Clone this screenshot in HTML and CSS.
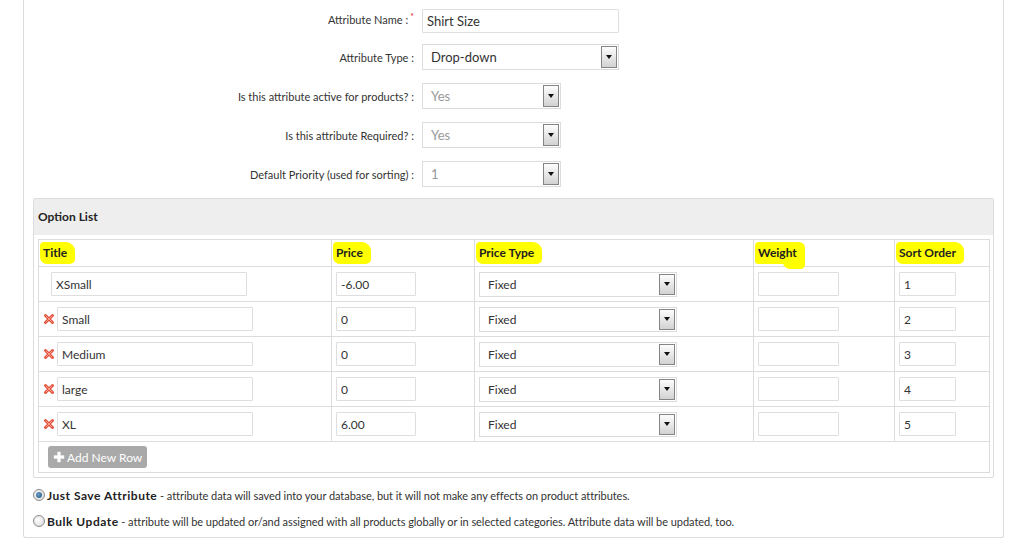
FILE: index.html
```html
<!DOCTYPE html>
<html>
<head>
<meta charset="utf-8">
<link rel="stylesheet" href="styles.css">
</head>
<body>
<div class="page">
  <div class="form-row first">
    <div class="label lift">Attribute Name :<span class="req">*</span></div>
    <input class="txt wide" type="text" value="Shirt Size">
  </div>
  <div class="form-row">
    <div class="label">Attribute Type :</div>
    <div class="sel wide"><span class="val">Drop-down</span><span class="arrow"></span></div>
  </div>
  <div class="form-row">
    <div class="label">Is this attribute active for products? :</div>
    <div class="sel narrow dis"><span class="val">Yes</span><span class="arrow"></span></div>
  </div>
  <div class="form-row">
    <div class="label">Is this attribute Required? :</div>
    <div class="sel narrow dis"><span class="val">Yes</span><span class="arrow"></span></div>
  </div>
  <div class="form-row last">
    <div class="label">Default Priority (used for sorting) :</div>
    <div class="sel narrow dis"><span class="val">1</span><span class="arrow"></span></div>
  </div>

  <div class="panel">
    <div class="panel-head">Option List</div>
    <div class="panel-body">
      <table class="opts">
        <colgroup>
          <col class="c1"><col class="c2"><col class="c3"><col class="c4"><col class="c5">
        </colgroup>
        <thead>
          <tr>
            <th><span class="hl hl-title">Title</span></th>
            <th><span class="hl hl-price">Price</span></th>
            <th><span class="hl hl-ptype">Price Type</span></th>
            <th><span class="hl hl-weight">Weight</span></th>
            <th><span class="hl hl-sort">Sort Order</span></th>
          </tr>
        </thead>
        <tbody>
          <tr>
            <td><div class="tcell"><span class="spacer"></span><input class="txt title-in" type="text" value="XSmall"></div></td>
            <td><input class="txt price-in" type="text" value="-6.00"></td>
            <td><div class="sel tsel"><span class="val">Fixed</span><span class="arrow"></span></div></td>
            <td><input class="txt weight-in" type="text" value=""></td>
            <td><input class="txt sort-in" type="text" value="1"></td>
          </tr>
          <tr>
            <td><div class="tcell"><svg class="del" viewBox="0 0 12 12" width="12" height="12"><path d="M2.5 2.5 L9.5 9.5 M9.5 2.5 L2.5 9.5" stroke="#e5533d" stroke-width="3" stroke-linecap="round"/><path d="M3 3 L9 9 M9 3 L3 9" stroke="#f7a08e" stroke-width="1" stroke-linecap="round"/></svg><input class="txt title-in" type="text" value="Small"></div></td>
            <td><input class="txt price-in" type="text" value="0"></td>
            <td><div class="sel tsel"><span class="val">Fixed</span><span class="arrow"></span></div></td>
            <td><input class="txt weight-in" type="text" value=""></td>
            <td><input class="txt sort-in" type="text" value="2"></td>
          </tr>
          <tr>
            <td><div class="tcell"><svg class="del" viewBox="0 0 12 12" width="12" height="12"><path d="M2.5 2.5 L9.5 9.5 M9.5 2.5 L2.5 9.5" stroke="#e5533d" stroke-width="3" stroke-linecap="round"/><path d="M3 3 L9 9 M9 3 L3 9" stroke="#f7a08e" stroke-width="1" stroke-linecap="round"/></svg><input class="txt title-in" type="text" value="Medium"></div></td>
            <td><input class="txt price-in" type="text" value="0"></td>
            <td><div class="sel tsel"><span class="val">Fixed</span><span class="arrow"></span></div></td>
            <td><input class="txt weight-in" type="text" value=""></td>
            <td><input class="txt sort-in" type="text" value="3"></td>
          </tr>
          <tr>
            <td><div class="tcell"><svg class="del" viewBox="0 0 12 12" width="12" height="12"><path d="M2.5 2.5 L9.5 9.5 M9.5 2.5 L2.5 9.5" stroke="#e5533d" stroke-width="3" stroke-linecap="round"/><path d="M3 3 L9 9 M9 3 L3 9" stroke="#f7a08e" stroke-width="1" stroke-linecap="round"/></svg><input class="txt title-in" type="text" value="large"></div></td>
            <td><input class="txt price-in" type="text" value="0"></td>
            <td><div class="sel tsel"><span class="val">Fixed</span><span class="arrow"></span></div></td>
            <td><input class="txt weight-in" type="text" value=""></td>
            <td><input class="txt sort-in" type="text" value="4"></td>
          </tr>
          <tr>
            <td><div class="tcell"><svg class="del" viewBox="0 0 12 12" width="12" height="12"><path d="M2.5 2.5 L9.5 9.5 M9.5 2.5 L2.5 9.5" stroke="#e5533d" stroke-width="3" stroke-linecap="round"/><path d="M3 3 L9 9 M9 3 L3 9" stroke="#f7a08e" stroke-width="1" stroke-linecap="round"/></svg><input class="txt title-in" type="text" value="XL"></div></td>
            <td><input class="txt price-in" type="text" value="6.00"></td>
            <td><div class="sel tsel"><span class="val">Fixed</span><span class="arrow"></span></div></td>
            <td><input class="txt weight-in" type="text" value=""></td>
            <td><input class="txt sort-in" type="text" value="5"></td>
          </tr>
          <tr class="add-row">
            <td colspan="5">
              <button class="add-btn" type="button"><svg class="plus" viewBox="0 0 12 12" width="12" height="12"><path d="M4.5 1 H7.5 V4.5 H11 V7.5 H7.5 V11 H4.5 V7.5 H1 V4.5 H4.5 Z" fill="#fff" stroke="#eee" stroke-width="0.5"/></svg>Add New Row</button>
            </td>
          </tr>
        </tbody>
      </table>
    </div>
  </div>

  <div class="radios">
    <div class="radio-row"><span class="radio checked"></span><span class="rtext"><b>Just Save Attribute</b> - attribute data will saved into your database, but it will not make any effects on product attributes.</span></div>
    <div class="radio-row"><span class="radio"></span><span class="rtext"><b>Bulk Update</b> - attribute will be updated or/and assigned with all products globally or in selected categories. Attribute data will be updated, too.</span></div>
  </div>
</div>
</body>
</html>
```

FILE: styles.css
```css
* { box-sizing: border-box; }
html, body { margin: 0; padding: 0; background: #fff; }
body {
  font-family: Lato, "Open Sans", Arial, sans-serif;
  color: #333;
  font-size: 11px;
}
.page {
  margin-left: 23px;
  width: 981px;
  border: 1px solid #dcdcdc;
  border-top: none;
  border-radius: 0 0 3px 3px;
  padding-top: 9px;
  padding-bottom: 3px;
}
.form-row {
  display: flex;
  align-items: center;
  height: 26px;
  margin-bottom: 13px;
}
.form-row.first { height: 24px; margin-bottom: 11px; }
.form-row.last { margin-bottom: 11px; }
.label {
  width: 390px;
  text-align: right;
  font-size: 11px;
  color: #333;
  margin-right: 8px;
}
.label.lift { padding-bottom: 5px; }
.req { color: #e0202a; font-size: 9px; vertical-align: 4px; margin-left: 2px; }

.txt {
  height: 24px;
  border: 1px solid #dedede;
  border-radius: 1px;
  padding: 0 4px;
  font-family: Lato, "Open Sans", Arial, sans-serif;
  font-size: 12px;
  color: #333;
  background: #fff;
  outline: none;
  margin: 0;
}
.txt.wide { width: 197px; font-size: 13px; }

.sel {
  display: flex;
  align-items: center;
  height: 26px;
  border: 1px solid #dcdcdc;
  background: #fff;
  padding: 1px 1px 1px 8px;
}
.sel .val { flex: 1; font-size: 13px; color: #333; }
.sel.dis .val { color: #999; }
.sel.wide { width: 197px; }
.sel.narrow { width: 139px; }
.arrow {
  width: 16px;
  height: 100%;
  border: 1px solid #858585;
  background: linear-gradient(#fdfdfd, #d2d2d2);
  display: flex;
  align-items: center;
  justify-content: center;
}
.arrow::after {
  content: "";
  border-left: 3.5px solid transparent;
  border-right: 3.5px solid transparent;
  border-top: 4px solid #111;
}

.panel {
  margin: 0 9px;
  border: 1px solid #dcdcdc;
  border-radius: 2px;
}
.panel-head {
  background: #eeeeee;
  height: 36px;
  display: flex;
  align-items: center;
  padding-left: 4px;
  font-weight: bold;
  font-size: 12px;
  color: #222;
  padding-bottom: 1px;
}
.panel-body { padding: 4px; }
.opts {
  width: 951px;
  table-layout: fixed;
  border-collapse: collapse;
  border: 1px solid #dcdcdc;
}
.c1 { width: 293px; }
.c2 { width: 143px; }
.c3 { width: 279px; }
.c4 { width: 141px; }
.c5 { width: 95px; }
.opts th {
  height: 27px;
  text-align: left;
  font-size: 12px;
  font-weight: bold;
  color: #222;
  padding: 0 4px;
  border: 1px solid #dcdcdc;
  vertical-align: middle;
  line-height: 14px;
}
.opts td {
  height: 35px;
  padding: 0 4px;
  border: 1px solid #dcdcdc;
  vertical-align: middle;
}
.tcell { display: flex; align-items: center; }
.spacer { width: 8px; flex: none; }
.del { flex: none; margin-right: 2px; }
.title-in { width: 196px; }
.price-in { width: 80px; }
.weight-in { width: 81px; }
.sort-in { width: 57px; }
.tsel { width: 198px; height: 25px; }
.tsel .val { font-size: 12px; }

.hl {
  display: inline-block;
  position: relative;
  background: #ffff00;
  padding: 4px 8px 4px 3px;
  margin: -4px 0 -4px -3px;
  border-radius: 4px 9px 5px 7px;
}
.hl-weight { border-radius: 4px 6px 2px 3px; }
.hl-weight::after {
  content: "";
  position: absolute;
  right: 0;
  bottom: -5px;
  width: 22px;
  height: 7px;
  background: #ffff00;
  border-radius: 0 0 5px 8px;
}

.add-row td { height: 31px; padding: 0 9px; }
.add-btn {
  display: inline-flex;
  align-items: center;
  height: 22px;
  width: 99px;
  background: #a9a9a9;
  color: #fff;
  border: none;
  border-radius: 3px;
  font-family: Lato, "Open Sans", Arial, sans-serif;
  font-size: 12px;
  padding: 0 0 0 5px;
}
.plus { margin-right: 2px; }

.radios { margin-top: 4px; }
.radio-row {
  display: flex;
  align-items: center;
  height: 26px;
  padding-left: 9px;
  font-size: 11px;
}
.radio {
  width: 12px;
  height: 12px;
  border-radius: 50%;
  border: 1px solid #8c8c8c;
  background: radial-gradient(circle at 40% 40%, #fff, #d4d4d4);
  margin-right: 2px;
  flex: none;
  display: flex;
  align-items: center;
  justify-content: center;
}
.radio.checked::after {
  content: "";
  width: 6px;
  height: 6px;
  border-radius: 50%;
  background: radial-gradient(circle at 40% 40%, #6a9ec8, #1f4f7a);
}
.rtext { letter-spacing: -0.05px; }
.rtext b { font-weight: bold; font-size: 12px; letter-spacing: 0.5px; color: #222; }
```
